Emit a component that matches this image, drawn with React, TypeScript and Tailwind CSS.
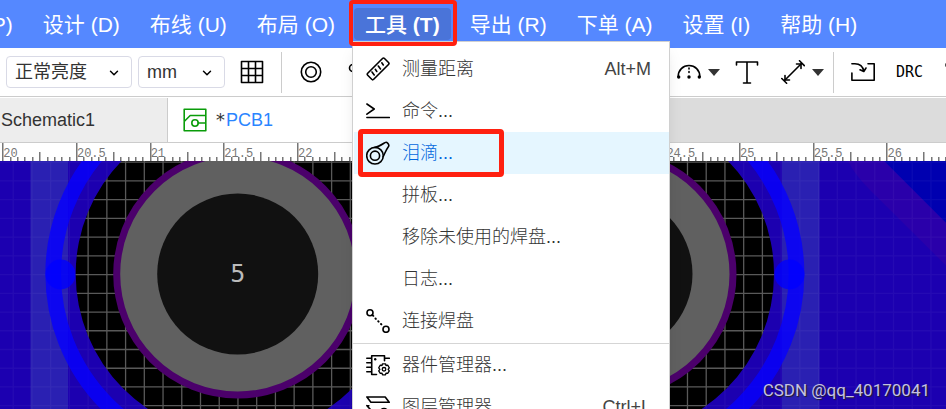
import type { ReactNode } from "react";
import { ChevronDown } from "lucide-react";

const Icon: React.FC<{ children: ReactNode; className?: string }> = ({
  children,
  className = "",
}) => (
  <svg
    viewBox="0 0 24 24"
    width={24}
    height={24}
    fill="none"
    stroke="currentColor"
    strokeWidth={1.6}
    strokeLinecap="round"
    strokeLinejoin="round"
    className={`shrink-0 ${className}`}
    aria-hidden="true"
  >
    {children}
  </svg>
);

const GridIcon = () => (
  <Icon>
    <path d="M1.5 1.5h21v21h-21zM8.5 1.5v21M15.5 1.5v21M1.5 8.5h21M1.5 15.5h21" />
  </Icon>
);

const PadIcon = () => (
  <Icon>
    <circle cx="12" cy="12" r="9.7" />
    <circle cx="12" cy="12" r="5.3" />
  </Icon>
);

const ArcIcon = () => (
  <Icon>
    <path d="M1.2 16.5C1.2 10 6 5.5 12 5.5S22.8 10 22.8 16.5" />
    <path d="M12 8v6" strokeDasharray="1 2.5" />
    <g fill="currentColor" stroke="none">
      <circle cx="1.7" cy="17" r="1.7" />
      <circle cx="12" cy="17" r="1.7" />
      <circle cx="22.3" cy="17" r="1.7" />
    </g>
  </Icon>
);

const TextIcon = () => (
  <Icon>
    <path d="M1.5 5V2h21v3M12 2v21M8.5 23h7" />
  </Icon>
);

const DimensionIcon = () => (
  <Icon>
    <path d="M3.5 20.5l17-17M.8 18.5l4.8 4.8M18.5.8l4.8 4.8" />
    <path d="M4 15.5v4.5h4.5M15.5 4H20v4.5" />
  </Icon>
);

const ImportIcon = () => (
  <Icon>
    <path d="M.9 13v7.3h22.3V3.7H17" />
    <path d="M.9 3.7h3c5 0 8 2.5 8.9 7.5M9 9.8l3.8 1.7L15 8" />
  </Icon>
);

const PcbIcon = () => (
  <Icon className="text-[#0a9c0a]">
    <path d="M1.2 1.2h21.6v21.6H1.2zM1.2 13.5l6-6h15.6M15.2 15h7.6" />
    <circle cx="12" cy="15" r="3.2" />
  </Icon>
);

const RulerIcon = () => (
  <Icon>
    <path d="M1.7 16.3L16.5 1.5q1-1 2 0l4 4q1 1 0 2L7.7 22.3q-1 1-2 0l-4-4q-1-1 0-2z" />
    <path d="M6 15l2.2 3M9.3 12.3l1.5 2.2M12.3 9l2.2 3M15.8 5.8l1.5 2.2" />
  </Icon>
);

const CommandIcon = () => (
  <Icon>
    <path d="M.9 5l7.3 5L.9 15.2M.9 18.5h22.5" />
  </Icon>
);

const TeardropIcon = () => (
  <Icon>
    <circle cx="9" cy="14.7" r="8.3" />
    <circle cx="9" cy="14.7" r="4.6" />
    <path d="M9 6.4C12.5 6 16 3.5 19 1.6q1.500-.8 2.500.4l1 1.300q.8 1.300-.3 2.600C19.500 9.500 18.800 13 17.200 15.500" />
  </Icon>
);

const ConnectIcon = () => (
  <Icon>
    <circle cx="4" cy="3.8" r="3" />
    <circle cx="20" cy="20.3" r="3" />
    <path d="M6 6l1.5 1" />
    <path d="M9.5 9.5l8 8" strokeDasharray=".5 3.4" strokeWidth={2} />
  </Icon>
);

const DeviceIcon = () => (
  <Icon>
    <path d="M10.5 21.5H5.7V2.7h12.8v5M.8 5.3h4.9M.8 9.7h4.9M.8 14.3h4.9M.8 18.7h4.9M18.5 5.3h4.8" />
    <circle cx="9.2" cy="6.3" r="1.2" fill="currentColor" stroke="none" />
    <circle cx="18" cy="16.3" r="1.8" strokeWidth={1.3} />
    <path
      d="M16.5 10.8h3l.5 1.7 1.7-.3 1.6 2.6-1.2 1.5 1.2 1.5-1.6 2.6-1.7-.3-.5 1.7h-3l-.5-1.7-1.7.3-1.6-2.6 1.2-1.5-1.2-1.5 1.6-2.6 1.7.3z"
      strokeWidth={1.3}
    />
  </Icon>
);

const LayersIcon = () => (
  <Icon>
    <path d="M.9 2h18.3l4 5.3H4.9zM.9 10.7h2M.9 10.7l4 4.3h6M.9 17l4 5h8" />
    <circle cx="18" cy="17.5" r="4" />
  </Icon>
);

const menus = [
  { name: "放置", hotkey: "(P)" },
  { name: "设计", hotkey: "(D)" },
  { name: "布线", hotkey: "(U)" },
  { name: "布局", hotkey: "(O)" },
  { name: "工具", hotkey: "(T)", open: true },
  { name: "导出", hotkey: "(R)" },
  { name: "下单", hotkey: "(A)" },
  { name: "设置", hotkey: "(I)" },
  { name: "帮助", hotkey: "(H)" },
];

type ToolItem = {
  label: string;
  icon?: ReactNode;
  shortcut?: string;
  active?: boolean;
  divided?: boolean;
};

const toolItems: ToolItem[] = [
  { label: "测量距离", icon: <RulerIcon />, shortcut: "Alt+M" },
  { label: "命令...", icon: <CommandIcon /> },
  { label: "泪滴...", icon: <TeardropIcon />, active: true },
  { label: "拼板..." },
  { label: "移除未使用的焊盘..." },
  { label: "日志..." },
  { label: "连接焊盘", icon: <ConnectIcon /> },
  { label: "器件管理器...", icon: <DeviceIcon />, divided: true },
  { label: "图层管理器...", icon: <LayersIcon />, shortcut: "Ctrl+L" },
];

const ToolsMenu = () => (
  <div
    role="menu"
    className="absolute -left-0.5 top-[33px] z-10 w-[318px] border border-[#d0d0d0] bg-white pt-1.5 text-lg text-[#333] shadow-lg"
  >
    {toolItems.map((item) => (
      <div
        key={item.label}
        className={`pl-px ${item.divided ? "mt-px border-t border-[#d5d5d5]" : ""}`}
      >
        <button
          role="menuitem"
          className={`flex h-[42px] w-full items-center gap-3 pl-3 pr-[18px] font-light ${
            item.active ? "bg-[#e5f6ff] text-[#0066dd]" : ""
          }`}
        >
          <span className="w-6 text-black">{item.icon}</span>
          <span>{item.label}</span>
          {item.shortcut && (
            <span className="ml-auto text-[#444]">{item.shortcut}</span>
          )}
        </button>
        {item.active && (
          <div className="pointer-events-none absolute left-[5px] top-[87px] h-12 w-[146px] rounded border-[5px] border-[#ff2010]"></div>
        )}
      </div>
    ))}
  </div>
);

const MenuBar = () => (
  <nav className="flex h-12 shrink-0 items-center gap-2 bg-[#5588ff] text-[21px] text-white">
    {menus.map((menu, index) => (
      <div
        key={menu.name}
        className={`relative shrink-0 ${index === 0 ? "-ml-[74px]" : ""}`}
      >
        <button
          className={`block h-8 whitespace-nowrap rounded-sm px-[11px] pt-0.5 leading-[30px] ${
            menu.open ? "bg-[#4a74d9]" : ""
          }`}
        >
          <span className={menu.open ? "font-medium" : ""}>{menu.name}</span>{" "}
          <span className={menu.open ? "font-bold" : ""}>{menu.hotkey}</span>
        </button>
        {menu.open && (
          <>
            <ToolsMenu />
            <div className="pointer-events-none absolute -bottom-1.5 -left-[5px] -right-1.5 -top-2 z-20 rounded border-4 border-[#ff2010]"></div>
          </>
        )}
      </div>
    ))}
  </nav>
);

const ToolSelect: React.FC<{
  label: string;
  value: string;
  className: string;
}> = ({ label, value, className }) => (
  <div className={`relative h-8 shrink-0 ${className}`}>
    <select
      aria-label={label}
      defaultValue={value}
      className="h-full w-full appearance-none rounded-sm border border-[#d9dae6] bg-white pl-2 text-lg leading-6 text-[#333]"
    >
      <option>{value}</option>
    </select>
    <ChevronDown
      size={14}
      strokeWidth={2.5}
      className="pointer-events-none absolute right-[11px] top-2.5 text-black"
    />
  </div>
);

const Caret = () => (
  <svg width="12" height="7" viewBox="0 0 12 7" fill="#333" aria-hidden="true">
    <path d="M0 0h12L6 7z" />
  </svg>
);

const Divider = () => <div className="h-[41px] w-px shrink-0 bg-[#ccc]"></div>;

const Toolbar = () => (
  <div className="flex h-[49px] shrink-0 items-center justify-between border-b border-[#ccc] bg-white text-black">
    <div className="flex items-center pl-1.5">
      <ToolSelect label="亮度" value="正常亮度" className="w-[126px]" />
      <ToolSelect label="单位" value="mm" className="ml-1.5 w-[87px]" />
      <button aria-label="网格" className="ml-[15px] mr-[17px]">
        <GridIcon />
      </button>
      <Divider />
      <button aria-label="焊盘" className="ml-[17px]">
        <PadIcon />
      </button>
      <button aria-label="过孔" className="ml-6">
        <Icon>
          <circle cx="6" cy="8" r="3.5" />
        </Icon>
      </button>
    </div>
    <div className="flex items-center">
      <button aria-label="圆弧" className="flex items-center gap-[7px]">
        <ArcIcon />
        <Caret />
      </button>
      <button aria-label="文本" className="ml-[15px]">
        <TextIcon />
      </button>
      <button aria-label="尺寸" className="ml-[22px] mr-[9px] flex items-center gap-[7px]">
        <DimensionIcon />
        <Caret />
      </button>
      <Divider />
      <button aria-label="导入变更" className="ml-[17px]">
        <ImportIcon />
      </button>
      <button className="ml-[21px] font-['DejaVu_Sans_Mono',monospace] text-[15px]">
        DRC
      </button>
      <button aria-label="更多" className="-mr-[23px] ml-[22px] text-[#555]">
        <Icon>
          <path d="M.8 4v2h8v8" />
        </Icon>
      </button>
    </div>
  </div>
);

const Tabs = () => (
  <div className="flex h-[46px] shrink-0 border-b border-t border-b-[#ccc] border-t-white bg-[#dcdcdc] text-lg text-[#333]">
    <button className="flex w-[168px] items-center border-r border-[#ccc] bg-[#ededed]">
      <span className="-ml-1">.Schematic1</span>
    </button>
    <button className="flex w-60 items-center gap-2 bg-white pl-[15px]">
      <PcbIcon />
      <span className="flex items-center">
        <span className="w-[11px] font-['DejaVu_Sans_Mono',monospace]">*</span>
        <span className="text-[#2a85ff]">PCB1</span>
      </span>
    </button>
  </div>
);

const RULER_START = 3.3;
const RULER_STEP = 73.68;
const majors = Array.from({ length: 30 }, (_, i) => i);

const Ruler = () => (
  <svg className="block h-[18px] w-full shrink-0 bg-white" aria-label="标尺">
    {majors.map((i) => {
      const x = RULER_START + i * RULER_STEP;
      return (
        <g key={i} fill="#777">
          <rect x={Math.round(x) - 1} y="0" width="1.5" height="18" />
          {[1, 2, 3, 4, 5, 6, 7, 8, 9].map((n) => (
            <rect
              key={n}
              x={Math.round(x + (n * RULER_STEP) / 10) - 1}
              y={n === 5 ? 9 : 14}
              width="1.5"
              height="9"
            />
          ))}
          <text
            x={x}
            y="14"
            fontSize="12"
            fontFamily="'Liberation Mono', monospace"
          >
            {20 + i / 2}
          </text>
        </g>
      );
    })}
  </svg>
);

const GRID_STEP = 18.73;
const gridLines = Array.from({ length: 120 }, (_, i) => i);

const GridLines: React.FC<{ opacity: number }> = ({ opacity }) => (
  <g stroke="#fff" strokeWidth="1.3" opacity={opacity}>
    {gridLines.map((i) => (
      <g key={i}>
        <line
          x1={13.2 + i * GRID_STEP}
          x2={13.2 + i * GRID_STEP}
          y1="0"
          y2="100%"
        />
        <line
          x1="0"
          x2="100%"
          y1={1.2 + i * GRID_STEP}
          y2={1.2 + i * GRID_STEP}
        />
      </g>
    ))}
  </g>
);

const Pad: React.FC<{ cx: number; label?: string }> = ({ cx, label }) => (
  <g>
    <circle cx={cx} cy="113" r="121" fill="#606060" stroke="#4b006b" strokeWidth="7" />
    <circle cx={cx} cy="113" r="80.5" fill="#111" />
    {label && (
      <text
        x={cx}
        y="121"
        textAnchor="middle"
        fontSize="25"
        fill="#bbb"
        fontFamily="'DejaVu Sans Mono', monospace"
      >
        {label}
      </text>
    )}
  </g>
);

const Board = () => (
  <svg className="block w-full flex-1 bg-[#1c00b0]" aria-label="PCB">
    <defs>
      <clipPath id="cutout">
        <circle cx="237.7" cy="113" r="162" />
        <circle cx="612" cy="113" r="162" />
      </clipPath>
    </defs>

    {/* copper areas */}
    <path d="M884 0h2000v2000z" fill="#0000b0" />
    <path d="M848 0h36l1200 1200v36L870 29q-16-16-22-29z" fill="#2a00aa" />
    <rect x="30.5" width="37.5" height="100%" fill="#2a20b2" />
    <rect x="782" width="37.5" height="100%" fill="#2a20b2" />
    <GridLines opacity={0.04} />

    {/* outline rings */}
    <g fill="none" stroke="#0600ff" strokeWidth="15.7" opacity="0.8">
      <circle cx="237.7" cy="113" r="184.5" />
      <circle cx="612" cy="113" r="184.5" />
    </g>
    <g fill="#0000ff" opacity="0.8">
      <circle cx="60.5" cy="113.5" r="15" />
      <circle cx="789.5" cy="113.5" r="15" />
    </g>

    <g clipPath="url(#cutout)">
      <rect width="100%" height="100%" fill="#000" />
      <GridLines opacity={0.35} />
    </g>
    <Pad cx={237.7} label="5" />
    <Pad cx={612} />
  </svg>
);

const App = () => (
  <div className="relative flex h-screen flex-col overflow-hidden bg-white font-['Liberation_Sans','Noto_Sans_CJK_SC',sans-serif]">
    <MenuBar />
    <Toolbar />
    <Tabs />
    <Ruler />
    <Board />
    <p className="absolute bottom-1.5 right-4 font-['Roboto',sans-serif] text-[17px] text-[#c4c0e4] [text-shadow:1px_1px_1px_#222]">
      CSDN @qq_40170041
    </p>
  </div>
);

export default App;
